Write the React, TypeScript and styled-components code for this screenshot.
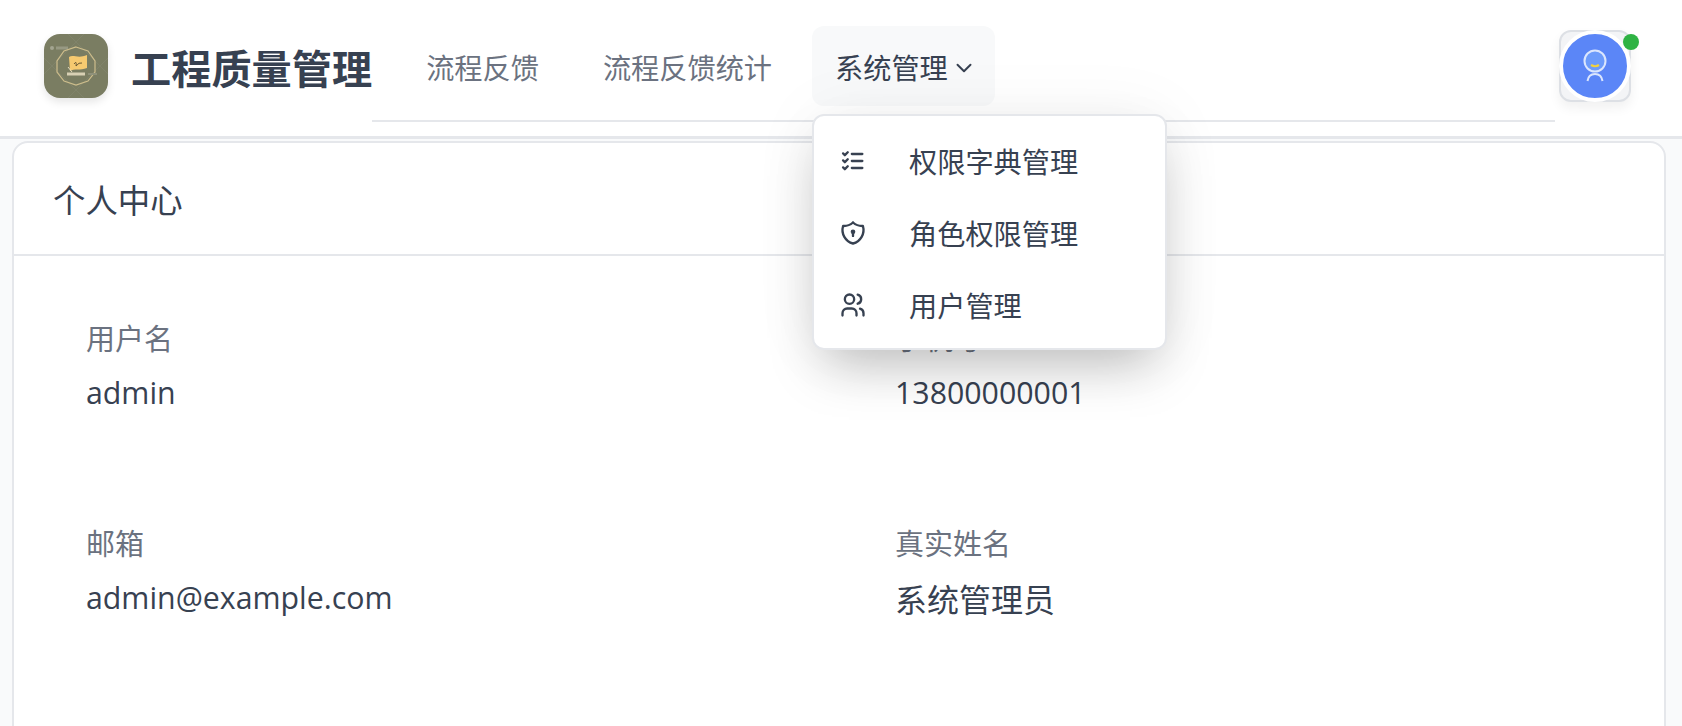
import React from "react";
import styled, { createGlobalStyle } from "styled-components";
import { TbChevronDown, TbListCheck, TbShieldLock, TbUsers } from "react-icons/tb";

const GlobalStyle = createGlobalStyle`
	* {
		box-sizing: border-box;
	}
	html,
	body {
		margin: 0;
		padding: 0;
		height: 100%;
		overflow: hidden;
		background: #f9fafb;
		color: #374151;
		font-family: "Open Sans", "Noto Sans CJK SC", sans-serif;
	}
`;

const Page = styled.div`
	height: 100vh;
	overflow: hidden;
	display: flex;
	flex-direction: column;
`;

const Header = styled.header`
	flex: none;
	height: 139px;
	padding: 0 51px 0 44px;
	display: flex;
	align-items: flex-start;
	background: #fff;
	border-bottom: solid 3px #e5e7eb;
`;

const LogoBox = styled.div`
	flex: none;
	width: 64px;
	height: 64px;
	margin-top: 34px;
	border-radius: 16px;
	overflow: hidden;
	background: #7a7d62;
	box-shadow: 0 4px 8px rgba(0, 0, 0, 0.1);
	& svg {
		display: block;
		filter: blur(0.5px);
	}
`;

const Title = styled.h1`
	flex: none;
	margin: 43px 0 0 23px;
	font-size: 40.2px;
	line-height: 52px;
	font-weight: 700;
	color: #374151;
`;

const Nav = styled.nav`
	flex: 1;
	height: 122px;
	margin-right: 4px;
	padding: 26px 0 0 30px;
	display: flex;
	align-items: flex-start;
	gap: 16px;
	border-bottom: solid 2px #e5e7eb;
`;

const NavItem = styled.div<{ $active?: boolean }>`
	position: relative;
	height: 80px;
	padding: ${(p) => (p.$active ? "0 18px 0 23px" : "0 24px")};
	display: flex;
	align-items: center;
	gap: 3px;
	border-radius: 12px;
	font-size: 28.2px;
	color: ${(p) => (p.$active ? "#374151" : "#6b7280")};
	background: ${(p) => (p.$active ? "#f8f9fa" : "transparent")};
	& > svg {
		flex: none;
		margin-top: 3px;
		stroke-width: 1.8;
	}
`;

const Menu = styled.div`
	position: absolute;
	top: 88px;
	left: 0;
	z-index: 10;
	width: 355px;
	padding: 9px 0 7px;
	background: #fff;
	border: solid 2px #e5e7eb;
	border-radius: 12px;
	box-shadow: 0 25px 50px -12px rgba(0, 0, 0, 0.25), 0 0 70px rgba(0, 0, 0, 0.05);
`;

const MenuItem = styled.div`
	height: 72px;
	padding-left: 25px;
	display: flex;
	align-items: center;
	gap: 42px;
	font-size: 28.2px;
	color: #374151;
	& svg {
		flex: none;
	}
`;

const MenuLabel = styled.span`
	padding-bottom: 2px;
`;

const Avatar = styled.div`
	position: relative;
	flex: none;
	width: 72px;
	height: 72px;
	margin-top: 30px;
	border: solid 2px #dde0e5;
	border-radius: 12px;
	background: #f3f4f6;
	box-shadow: 0 6px 12px rgba(0, 0, 0, 0.06);
`;

const AvatarCircle = styled.div`
	position: absolute;
	top: -2px;
	left: -2px;
	width: 72px;
	height: 72px;
	border-radius: 50%;
	border: solid 4px #fff;
	background: #5b86f7;
	display: flex;
	align-items: center;
	justify-content: center;
`;

const OnlineDot = styled.span`
	position: absolute;
	top: 2px;
	right: -10px;
	width: 16px;
	height: 16px;
	border-radius: 50%;
	background: #2fb344;
`;

const Main = styled.main`
	flex: 1;
	padding: 2px 16px 0 12px;
`;

const Card = styled.section`
	min-height: 700px;
	background: #fff;
	border: solid 2px #e5e7eb;
	border-radius: 16px;
`;

const CardHeader = styled.div`
	height: 113px;
	padding: 0 39px;
	display: flex;
	align-items: center;
	border-bottom: solid 2px #e5e7eb;
	font-size: 32.4px;
	color: #374151;
`;

const FieldGrid = styled.div`
	padding: 62px 0 0 72px;
	display: grid;
	grid-template-columns: 809px 1fr;
	grid-auto-rows: 205px;
`;

const Field = styled.div`
	display: flex;
	flex-direction: column;
	gap: 12px;
`;

const Label = styled.div`
	font-size: 29px;
	line-height: 42px;
	color: #6b7280;
`;

const Value = styled.div<{ $large?: boolean }>`
	margin-top: ${(p) => (p.$large ? "2px" : "0")};
	font-size: ${(p) => (p.$large ? "32px" : "30.3px")};
	line-height: 42px;
	color: #374151;
`;

const Logo = () => (
	<svg width="64" height="64" viewBox="0 0 64 64">
		<g stroke="#858870" strokeWidth="0.6">
			<path d="M0 24 L40 64 M24 0 L64 40 M0 40 L40 0 M24 64 L64 24" />
		</g>
		<circle cx="8" cy="14" r="2" fill="#a3a591" />
		<rect x="12" y="12.5" width="12" height="3" fill="#979983" />
		<polygon
			points="32,13 44,17 51,27 51,38 44,47 32,51 20,47 13,38 13,27 20,17"
			fill="none"
			stroke="#cdbd8c"
			strokeWidth="1.2"
		/>
		<path d="M25 23 C29 20 34 25 43 21 L43 34 C36 37 30 34 26 37 Z" fill="#f6ca70" />
		<path d="M30 30 Q33 26 32 32 Q35 28 38 29" fill="none" stroke="#6b5a35" strokeWidth="1" />
		<path d="M24 33 L28 38" stroke="#e6dcc0" strokeWidth="1" />
		<rect x="23" y="38.5" width="18" height="3" fill="#d8d0b4" />
		<rect x="44" y="39" width="9" height="2" fill="#8f917a" />
	</svg>
);

const AvatarFace = () => (
	<svg width="40" height="40" viewBox="0 0 40 40" fill="none">
		<circle cx="20" cy="15" r="10.5" fill="#6c9bfb" stroke="#dbe6fd" strokeWidth="2" />
		<path d="M16 19 Q20 21.5 24 19" stroke="#f2d23c" strokeWidth="2.2" />
		<path d="M12.5 35 Q13.5 28 20 28 Q26.5 28 27.5 35" stroke="#dbe6fd" strokeWidth="2" />
	</svg>
);

const menuItems = [
	{ icon: <TbListCheck size={28} />, label: "权限字典管理" },
	{ icon: <TbShieldLock size={28} />, label: "角色权限管理" },
	{ icon: <TbUsers size={28} />, label: "用户管理" },
];

const fields = [
	{ label: "用户名", value: "admin" },
	{ label: "手机号", value: "13800000001" },
	{ label: "邮箱", value: "admin@example.com" },
	{ label: "真实姓名", value: "系统管理员", large: true },
];

const App = () => {
	return (
		<Page>
			<GlobalStyle />
			<Header>
				<LogoBox>
					<Logo />
				</LogoBox>
				<Title>工程质量管理</Title>
				<Nav>
					<NavItem>流程反馈</NavItem>
					<NavItem>流程反馈统计</NavItem>
					<NavItem $active>
						系统管理
						<TbChevronDown size={26} />
						<Menu>
							{menuItems.map((item) => (
								<MenuItem key={item.label}>
									{item.icon}
									<MenuLabel>{item.label}</MenuLabel>
								</MenuItem>
							))}
						</Menu>
					</NavItem>
				</Nav>
				<Avatar>
					<AvatarCircle>
						<AvatarFace />
					</AvatarCircle>
					<OnlineDot />
				</Avatar>
			</Header>
			<Main>
				<Card>
					<CardHeader>个人中心</CardHeader>
					<FieldGrid>
						{fields.map((f) => (
							<Field key={f.label}>
								<Label>{f.label}</Label>
								<Value $large={f.large}>{f.value}</Value>
							</Field>
						))}
					</FieldGrid>
				</Card>
			</Main>
		</Page>
	);
};

export default App;
